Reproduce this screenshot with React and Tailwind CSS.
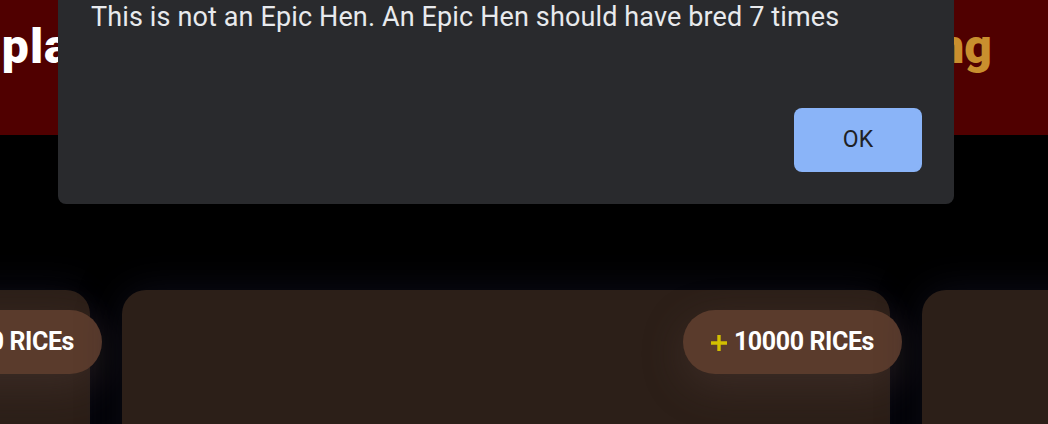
import React from "react";

function Card({ amount }) {
  return (
    <div className="relative w-[768px] h-[200px] shrink-0 rounded-[24px] bg-[#2c1f18] shadow-[0_0_40px_rgba(24,24,48,0.55)]">
      {amount && (
        <div className="absolute top-[20px] -right-[12px] h-[64px] pl-[28px] pr-[28px] flex items-center gap-[7px] rounded-full bg-[#5a3b2c] shadow-[0_12px_40px_rgba(80,60,55,0.45)] font-['Roboto',sans-serif] font-bold text-[25px] text-white">
          <svg width="16" height="16" viewBox="0 0 16 16" className="mt-[1px]">
            <path d="M6.3 0h3.4v6.3H16v3.4H9.7V16H6.3V9.7H0V6.3h6.3z" fill="#d2bf00" />
          </svg>
          <span className="tracking-[-0.4px]">{amount} RICEs</span>
        </div>
      )}
    </div>
  );
}

export default function App() {
  return (
    <div className="relative w-[1048px] h-[424px] overflow-hidden bg-black">
      {/* Banner */}
      <div className="h-[135px] bg-[#500000] flex items-start justify-between pt-[18px] pr-[56px] font-['Roboto',sans-serif] font-black text-[48px] leading-[58px]">
        <span className="-ml-[70px] tracking-[1px] text-white">Display Hens</span>
        <span className="text-[#c98f2e]">Breeding</span>
      </div>

      {/* Cards */}
      <div className="flex gap-8 -ml-[678px] mt-[155px]">
        <Card amount="10000" />
        <Card amount="10000" />
        <Card />
      </div>

      {/* Alert dialog */}
      <div className="absolute left-[58px] top-[-60px] w-[896px] h-[264px] rounded-[8px] bg-[#292a2d] font-['Roboto',sans-serif] flex flex-col">
        <p className="pl-[33px] pt-[61px] text-[27px] leading-[32px] tracking-[0.13px] text-[#e8eaed] whitespace-nowrap">
          This is not an Epic Hen. An Epic Hen should have bred 7 times
        </p>
        <div className="flex justify-end pr-[32px] mt-[75px]">
          <button className="w-[128px] h-[64px] rounded-[8px] bg-[#8ab4f8] text-[#202124] text-[23px] font-normal">
            OK
          </button>
        </div>
      </div>
    </div>
  );
}
